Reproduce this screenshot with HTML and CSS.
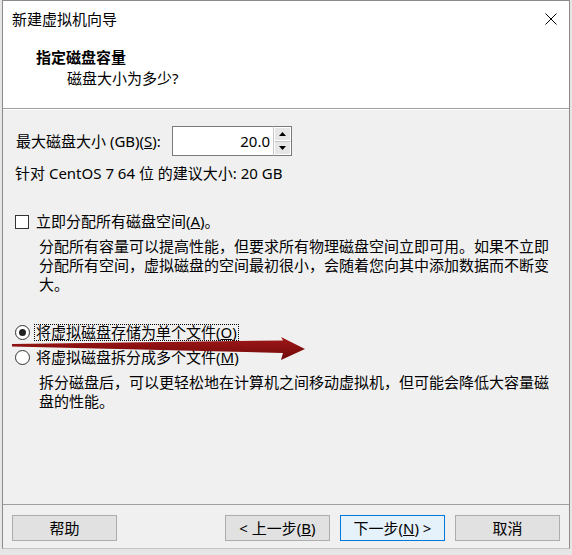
FILE: index.html
```html
<!DOCTYPE html>
<html lang="zh-CN">
<head>
<meta charset="utf-8">
<title>新建虚拟机向导</title>
<link rel="stylesheet" href="styles.css">
</head>
<body>
<div class="window">
  <div class="titlebar">
    <span class="title">新建虚拟机向导</span>
    <span class="close">
      <svg width="12" height="12" viewBox="0 0 12 12"><path d="M0.5 0.5 L11.5 11.5 M11.5 0.5 L0.5 11.5" stroke="#000" stroke-width="1" fill="none"/></svg>
    </span>
  </div>
  <div class="header">
    <div class="h-title">指定磁盘容量</div>
    <div class="h-sub">磁盘大小为多少?</div>
  </div>
  <div class="content">
    <div class="size-row">
      <label class="size-label">最大磁盘大小 (GB)(<u>S</u>):</label>
      <div class="spin">
        <div class="spin-input">20.0</div>
        <div class="spin-btns">
          <div class="spin-btn"><svg width="7" height="4" viewBox="0 0 7 4"><path d="M0 4 L3.5 0 L7 4 Z" fill="#000"/></svg></div>
          <div class="spin-btn"><svg width="7" height="4" viewBox="0 0 7 4"><path d="M0 0 L7 0 L3.5 4 Z" fill="#000"/></svg></div>
        </div>
      </div>
    </div>
    <div class="hint">针对 CentOS 7 64 位 的建议大小: 20 GB</div>
    <div class="option opt-check"><span class="checkbox"></span><span class="opt-label">立即分配所有磁盘空间(<u>A</u>)。</span></div>
    <p class="desc">分配所有容量可以提高性能，但要求所有物理磁盘空间立即可用。如果不立即分配所有空间，虚拟磁盘的空间最初很小，会随着您向其中添加数据而不断变大。</p>
    <div class="option opt-radio1"><span class="radio checked"></span><span class="opt-label focus">将虚拟磁盘存储为单个文件(<u>O</u>)</span></div>
    <div class="option opt-radio2"><span class="radio"></span><span class="opt-label">将虚拟磁盘拆分成多个文件(<u>M</u>)</span></div>
    <p class="desc">拆分磁盘后，可以更轻松地在计算机之间移动虚拟机，但可能会降低大容量磁盘的性能。</p>
  </div>
  <div class="footer">
    <button class="btn">帮助</button>
    <span class="spacer"></span>
    <button class="btn">&lt; 上一步(<u>B</u>)</button>
    <button class="btn primary">下一步(<u>N</u>) &gt;</button>
    <button class="btn">取消</button>
  </div>
</div>
<svg class="arrow" width="572" height="555" viewBox="0 0 572 555">
  <defs>
    <linearGradient id="ag" x1="0" y1="0" x2="0" y2="1">
      <stop offset="0" stop-color="#a01818"/>
      <stop offset="1" stop-color="#700808"/>
    </linearGradient>
  </defs>
  <path d="M12 344 L283 340.5 L281 337 L305 349 L281 360 L283 353 L12 346.5 Z" fill="url(#ag)"/>
</svg>
</body>
</html>
```

FILE: styles.css
```css
html, body {
  margin: 0;
  padding: 0;
}
body {
  position: relative;
  width: 572px;
  height: 555px;
  background: #e6e6e6;
  font-family: "Noto Sans", "Noto Sans CJK SC", sans-serif;
  font-size: 15px;
  color: #000;
  overflow: hidden;
}
.window {
  margin-left: 2px;
  width: 566px;
  height: 547px;
  border: 1px solid #8a8a8a;
  border-bottom-color: #c4c4c4;
  background: #f0f0f0;
  display: flex;
  flex-direction: column;
}
.titlebar {
  height: 36px;
  flex-shrink: 0;
  background: #fff;
  display: flex;
  align-items: center;
  padding-left: 9px;
  line-height: 19px;
}
.close {
  margin-left: auto;
  width: 36px;
  height: 36px;
  display: flex;
  align-items: center;
  justify-content: center;
}
.close svg {
  display: block;
}
.header {
  height: 60px;
  flex-shrink: 0;
  background: #fff;
  padding: 11px 0 0 33px;
  border-bottom: 1px solid #a0a0a0;
  line-height: 19px;
}
.h-title {
  font-weight: bold;
}
.h-sub {
  margin-top: 2px;
  padding-left: 31px;
}
.content {
  flex: 1;
  min-height: 0;
  padding: 16px 0 0 12px;
  line-height: 19px;
  border-top: 1px solid #fff;
}
.size-row {
  display: flex;
  align-items: center;
  height: 30px;
}
.size-label {
  width: 157px;
  padding-left: 1px;
  box-sizing: border-box;
}
.spin {
  display: flex;
  height: 30px;
}
.spin-input {
  width: 101px;
  height: 30px;
  box-sizing: border-box;
  border: 1px solid #7a7a7a;
  border-right: none;
  background: #fff;
  text-align: right;
  padding-right: 3px;
  line-height: 28px;
}
.spin-btns {
  width: 19px;
  display: flex;
  flex-direction: column;
  border: 1px solid #7a7a7a;
  border-left: 1px solid #c8c8c8;
  box-sizing: border-box;
  background: #fff;
}
.spin-btn {
  flex: 1;
  display: flex;
  align-items: center;
  justify-content: center;
  background: #e6e6e6;
  border: 1px solid #fff;
}
.spin-btn + .spin-btn {
  border-top: 1px solid #c8c8c8;
}
.spin-btn svg {
  display: block;
}
.hint {
  margin-top: 8px;
}
.option {
  display: flex;
  align-items: center;
  height: 19px;
}
.opt-check {
  margin-top: 29px;
}
.opt-radio1 {
  margin-top: 29px;
}
.opt-radio2 {
  margin-top: 6px;
}
.checkbox {
  width: 12px;
  height: 12px;
  border: 1px solid #333;
  background: #fff;
  margin-right: 7px;
  flex-shrink: 0;
}
.radio {
  width: 13px;
  height: 13px;
  border: 1px solid #333;
  border-radius: 50%;
  background: #fff;
  margin-right: 4px;
  flex-shrink: 0;
  display: flex;
  align-items: center;
  justify-content: center;
}
.radio.checked::after {
  content: "";
  width: 7px;
  height: 7px;
  border-radius: 50%;
  background: #222;
}
.opt-radio1 .opt-label,
.opt-radio2 .opt-label {
  padding: 0 1px;
  border: 1px solid transparent;
  line-height: 15px;
}
.focus {
  border: 1px dotted #000 !important;
}
.desc {
  margin: 6px 0 0 24px;
  width: 516px;
  line-height: 19px;
}
.footer {
  flex-shrink: 0;
  border-top: 1px solid #a0a0a0;
  padding: 10px 9px 7px 9px;
  display: flex;
  gap: 10px;
}
.spacer {
  flex: 1;
}
.btn {
  width: 105px;
  height: 26px;
  padding: 0;
  font-family: inherit;
  font-size: 15px;
  color: #000;
  background: #e1e1e1;
  border: 1px solid #adadad;
  line-height: 22px;
}
.btn.primary {
  background: #e5f1fb;
  border-color: #0078d7;
}
.arrow {
  position: absolute;
  left: 0;
  top: 0;
  pointer-events: none;
}
```
